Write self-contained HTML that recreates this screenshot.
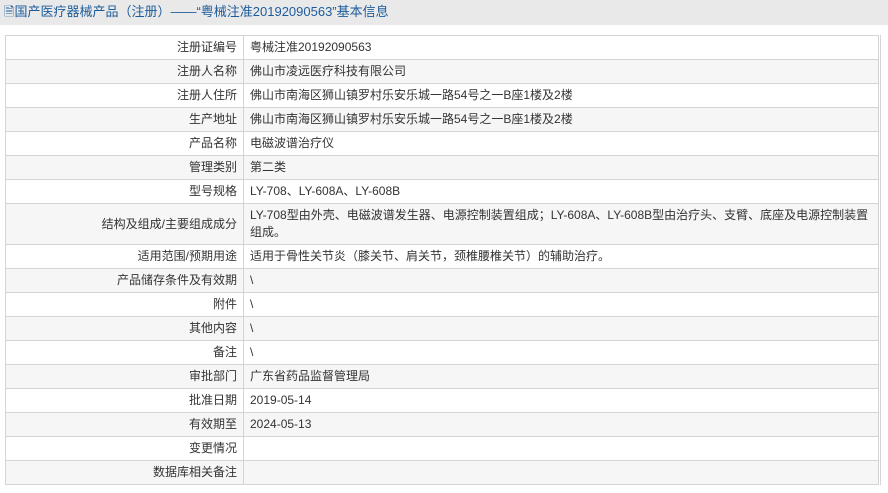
<!DOCTYPE html>
<html><head><meta charset="utf-8"><style>
body{margin:0;width:888px;height:493px;background:#fff;font-family:"Liberation Sans","Noto Sans CJK SC",sans-serif;font-size:12px;color:#333;overflow:hidden;position:relative}
.hd{position:absolute;left:0;top:0;width:888px;height:25px;background:#e9e9e9;color:#1d5c9c;font-size:13px;line-height:24px}
.hd span{margin-left:4px}
table{position:absolute;left:5px;top:35px;width:874px;border-collapse:collapse;border:1px solid #d0d0d0}
td{border:1px solid #d4d4d4;height:23px;padding:0 6px;line-height:17px;vertical-align:middle}
td.l{width:225px;text-align:right}
tr:nth-child(even) td{background:#f6f6f6}
.rb{position:absolute;left:880px;top:35px;width:1px;height:450px;background:#d4d4d4}
</style></head><body>
<div class="hd"><span>🗎国产医疗器械产品（注册）——“粤械注准20192090563”基本信息</span></div>
<table>
<tr><td class="l">注册证编号</td><td>粤械注准20192090563</td></tr>
<tr><td class="l">注册人名称</td><td>佛山市凌远医疗科技有限公司</td></tr>
<tr><td class="l">注册人住所</td><td>佛山市南海区狮山镇罗村乐安乐城一路54号之一B座1楼及2楼</td></tr>
<tr><td class="l">生产地址</td><td>佛山市南海区狮山镇罗村乐安乐城一路54号之一B座1楼及2楼</td></tr>
<tr><td class="l">产品名称</td><td>电磁波谱治疗仪</td></tr>
<tr><td class="l">管理类别</td><td>第二类</td></tr>
<tr><td class="l">型号规格</td><td>LY-708、LY-608A、LY-608B</td></tr>
<tr><td class="l" style="height:40px">结构及组成/主要组成成分</td><td>LY-708型由外壳、电磁波谱发生器、电源控制装置组成；LY-608A、LY-608B型由治疗头、支臂、底座及电源控制装置组成。</td></tr>
<tr><td class="l">适用范围/预期用途</td><td>适用于骨性关节炎（膝关节、肩关节，颈椎腰椎关节）的辅助治疗。</td></tr>
<tr><td class="l">产品储存条件及有效期</td><td>\</td></tr>
<tr><td class="l">附件</td><td>\</td></tr>
<tr><td class="l">其他内容</td><td>\</td></tr>
<tr><td class="l">备注</td><td>\</td></tr>
<tr><td class="l">审批部门</td><td>广东省药品监督管理局</td></tr>
<tr><td class="l">批准日期</td><td>2019-05-14</td></tr>
<tr><td class="l">有效期至</td><td>2024-05-13</td></tr>
<tr><td class="l">变更情况</td><td></td></tr>
<tr><td class="l">数据库相关备注</td><td></td></tr>
</table>
<div class="rb"></div>
</body></html>
